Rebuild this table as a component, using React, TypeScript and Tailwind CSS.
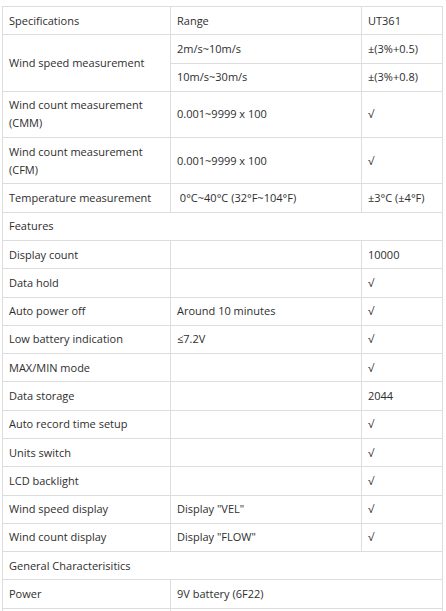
type Row =
  | { kind: "full"; label: string }
  | { kind: "row"; label: string; range?: string; value?: string }
  | { kind: "wide"; label: string; range: string };

const rows: Row[] = [
  { kind: "row", label: "Wind count measurement (CMM)", range: "0.001~9999 x 100", value: "√" },
  { kind: "row", label: "Wind count measurement (CFM)", range: "0.001~9999 x 100", value: "√" },
  { kind: "row", label: "Temperature measurement", range: "\u00a00°C~40°C (32°F~104°F)", value: "±3°C (±4°F)" },
  { kind: "full", label: "Features" },
  { kind: "row", label: "Display count", value: "10000" },
  { kind: "row", label: "Data hold", value: "√" },
  { kind: "row", label: "Auto power off", range: "Around 10 minutes", value: "√" },
  { kind: "row", label: "Low battery indication", range: "≤7.2V", value: "√" },
  { kind: "row", label: "MAX/MIN mode", value: "√" },
  { kind: "row", label: "Data storage", value: "2044" },
  { kind: "row", label: "Auto record time setup", value: "√" },
  { kind: "row", label: "Units switch", value: "√" },
  { kind: "row", label: "LCD backlight", value: "√" },
  { kind: "row", label: "Wind speed display", range: 'Display "VEL"', value: "√" },
  { kind: "row", label: "Wind count display", range: 'Display "FLOW"', value: "√" },
  { kind: "full", label: "General Characterisitics" },
  { kind: "wide", label: "Power", range: "9V battery (6F22)" },
];

const cell = "border border-[#dddddd] px-[6px] py-[4.65px] align-middle";

export default function App() {
  return (
    <div className="w-[446px] h-[611px] overflow-hidden bg-white pt-[6px] pl-[2px]">
      <table
        className="border-collapse table-fixed w-[440px] text-[11px] leading-[18px] text-[#2e2e2e] text-left"
        style={{ fontFamily: '"Open Sans", "Noto Sans", sans-serif' }}
      >
        <colgroup>
          <col className="w-[168px]" />
          <col className="w-[191px]" />
          <col className="w-[81px]" />
        </colgroup>
        <tbody>
          <tr>
            <td className={cell}>Specifications</td>
            <td className={cell}>Range</td>
            <td className={cell}>UT361</td>
          </tr>
          <tr>
            <td className={cell} rowSpan={2}>
              Wind speed measurement
            </td>
            <td className={cell}>2m/s~10m/s</td>
            <td className={cell}>±(3%+0.5)</td>
          </tr>
          <tr>
            <td className={cell}>10m/s~30m/s</td>
            <td className={cell}>±(3%+0.8)</td>
          </tr>
          {rows.map((r, i) => {
            if (r.kind === "full") {
              return (
                <tr key={i}>
                  <td className={cell} colSpan={3}>
                    {r.label}
                  </td>
                </tr>
              );
            }
            if (r.kind === "wide") {
              return (
                <tr key={i}>
                  <td className={cell}>{r.label}</td>
                  <td className={cell} colSpan={2}>
                    {r.range}
                  </td>
                </tr>
              );
            }
            return (
              <tr key={i}>
                <td className={cell}>{r.label}</td>
                <td className={cell}>{r.range ?? ""}</td>
                <td className={cell}>{r.value ?? ""}</td>
              </tr>
            );
          })}
          {/* next row is cut off by the window edge */}
          <tr className="h-[28px]">
            <td className={cell}></td>
            <td className={cell} colSpan={2}></td>
          </tr>
        </tbody>
      </table>
    </div>
  );
}
